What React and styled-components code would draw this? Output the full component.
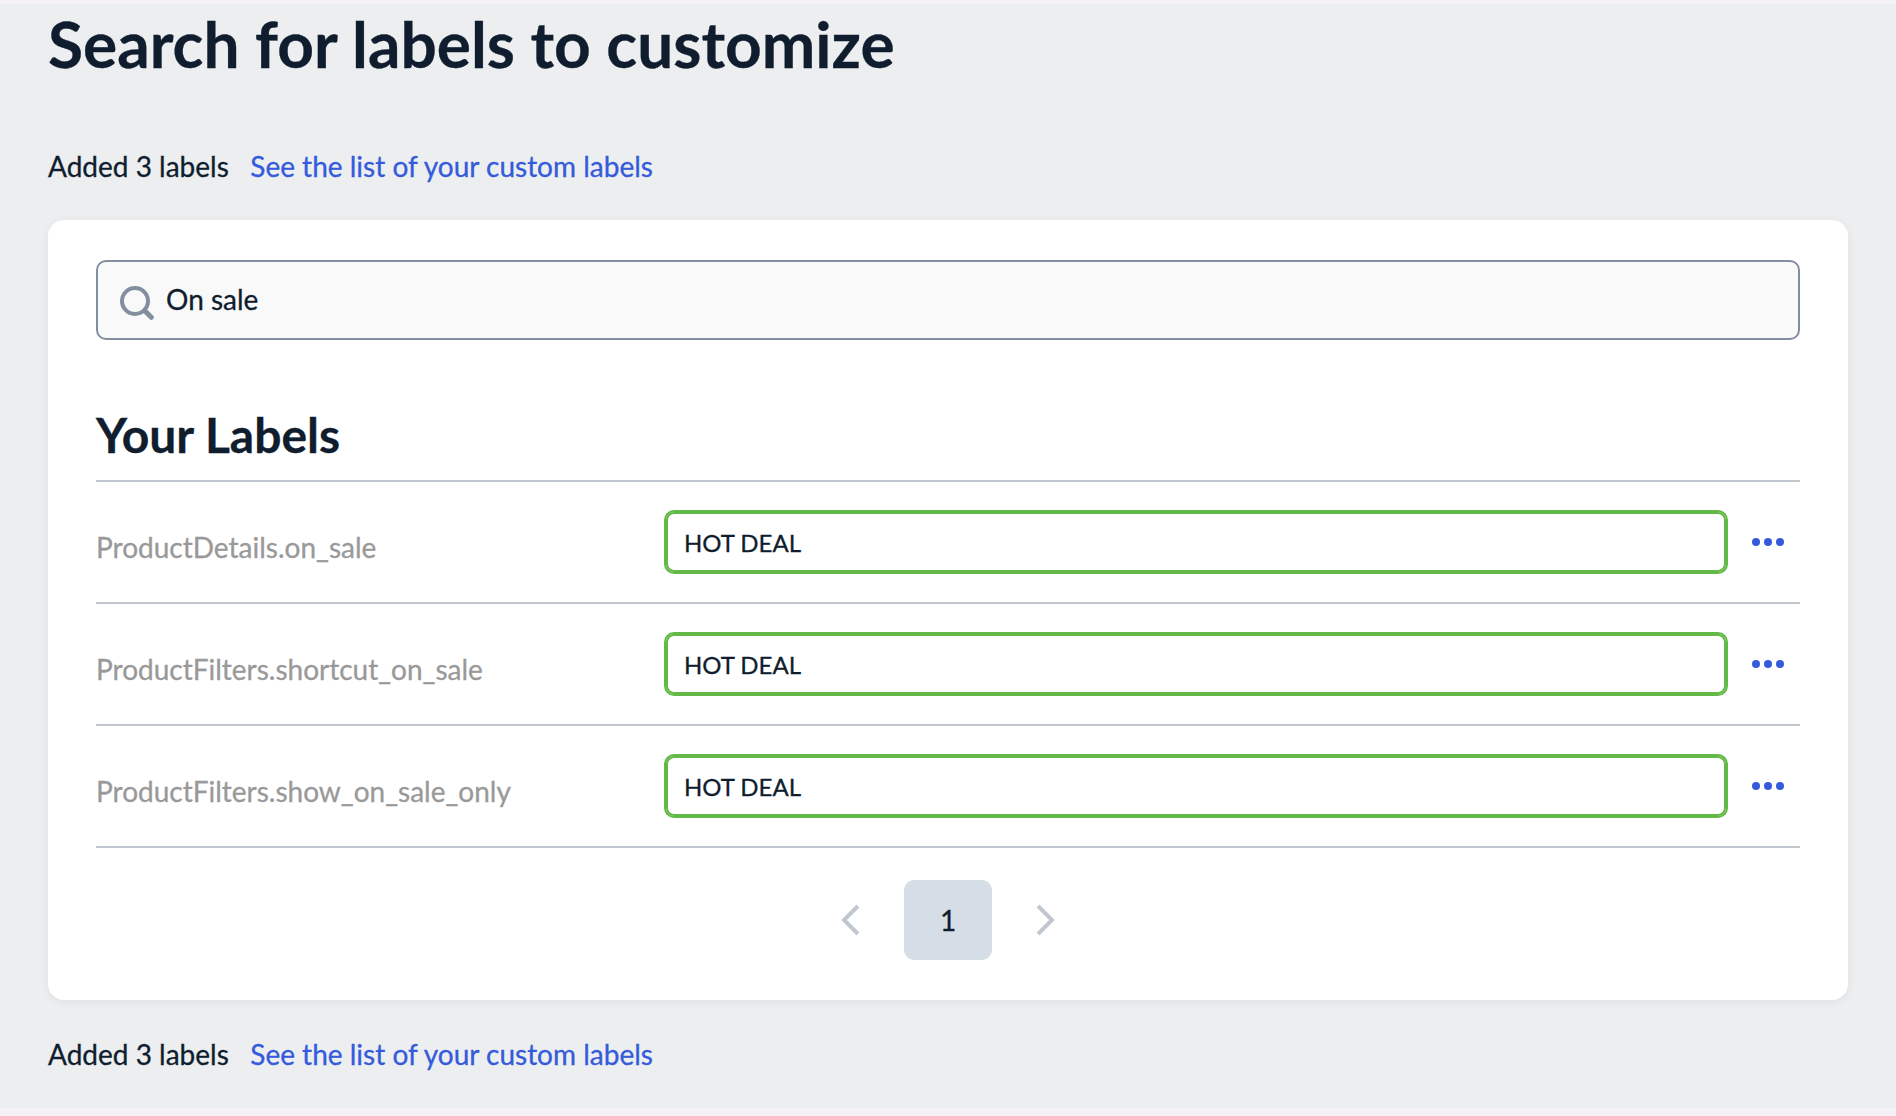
import React from 'react';
import styled, { createGlobalStyle } from 'styled-components';

const GlobalStyle = createGlobalStyle`
	* {
		box-sizing: border-box;
	}
	body {
		margin: 0;
		background: #f4f1f4;
		color: #0f1d2e;
		font-family: Lato, 'Liberation Sans', sans-serif;
		font-size: 28px;
		-webkit-text-stroke: 0.3px;
	}
`;

const Page = styled.div`
	height: 1116px;
	border-top: 4px solid #f4f1f4;
	border-bottom: 8px solid #f4f1f4;
	padding: 0 48px;
	background: #eceef0;
	overflow: hidden;
`;

const Title = styled.h1`
	margin: 0;
	padding-top: 4px;
	font-size: 64px;
	font-weight: 700;
	line-height: 72px;
`;

const Summary = styled.div`
	display: flex;
	gap: 21.5px;
	line-height: 40px;
	margin-top: ${(props) => props.$top}px;
`;

const Link = styled.a`
	color: #345bdb;
	text-decoration: none;
`;

const Card = styled.section`
	height: 780px;
	margin-top: 34px;
	padding: 40px 48px;
	border-radius: 16px;
	background: #fff;
	box-shadow: 0 2px 10px rgba(0, 0, 0, 0.06);
`;

const SearchBox = styled.label`
	display: flex;
	align-items: center;
	height: 80px;
	padding-left: 20px;
	border: 2px solid #838f9e;
	border-radius: 10px;
	background: #f9f9f9;
`;

const SearchIcon = styled.svg`
	width: 36px;
	height: 36px;
	margin: 4px 12px 0 0;
	fill: none;
	stroke: #838f9e;
	stroke-linecap: round;
`;

const Input = styled.input`
	flex: 1;
	min-width: 0;
	padding: 0 0 2px;
	border: 0;
	outline: 0;
	background: none;
	color: inherit;
	font: inherit;
`;

const SubTitle = styled.h2`
	margin: 0;
	padding: 65px 0 16px;
	border-bottom: 2px solid #c1c7ce;
	font-size: 48px;
	font-weight: 700;
	line-height: 59px;
`;

const Row = styled.div`
	display: grid;
	grid-template-columns: 568px 1064px 72px;
	align-items: center;
	height: 122px;
	border-bottom: 2px solid #c1c7ce;
`;

const Key = styled.span`
	padding-top: 9px;
	color: #999;
`;

const ValueInput = styled.input`
	width: 100%;
	height: 64px;
	padding: 0 18px;
	border: 2px solid #62b946;
	border-radius: 10px;
	outline: 0;
	box-shadow: inset 0 0 0 2px #62b946;
	background: #fff;
	color: inherit;
	font-family: inherit;
	font-size: 24px;
`;

const MoreButton = styled.button`
	display: flex;
	gap: 4px;
	padding: 0 0 0 24px;
	border: 0;
	background: none;
`;

const Dot = styled.span`
	width: 8px;
	height: 8px;
	border-radius: 50%;
	background: #345bdb;
`;

const Pagination = styled.nav`
	display: flex;
	justify-content: center;
	align-items: center;
	gap: 44px;
	margin-top: 32px;
`;

const PageNumber = styled.span`
	width: 88px;
	height: 80px;
	border-radius: 10px;
	background: #d5dde6;
	line-height: 81px;
	text-align: center;
`;

const Arrow = styled.svg`
	width: 20px;
	height: 32px;
	fill: none;
	stroke: #c1c7ce;
	stroke-width: 4;
`;

const labels = [
	{ key: 'ProductDetails.on_sale', value: 'HOT DEAL' },
	{ key: 'ProductFilters.shortcut_on_sale', value: 'HOT DEAL' },
	{ key: 'ProductFilters.show_on_sale_only', value: 'HOT DEAL' },
];

function LabelsSummary({ top }) {
	return (
		<Summary $top={top}>
			<span>Added 3 labels</span>
			<Link href="#custom">See the list of your custom labels</Link>
		</Summary>
	);
}

export default function App() {
	return (
		<Page>
			<GlobalStyle />
			<Title>Search for labels to customize</Title>
			<LabelsSummary top={66} />

			<Card>
				<SearchBox>
					<SearchIcon viewBox="0 0 36 36">
						<circle cx="17" cy="17" r="13" strokeWidth="4" />
						<path d="M27.5 27.5L33.3 33.3" strokeWidth="5" />
					</SearchIcon>
					<Input defaultValue="On sale" />
				</SearchBox>

				<SubTitle>Your Labels</SubTitle>
				{labels.map((label) => (
					<Row key={label.key}>
						<Key>{label.key}</Key>
						<ValueInput defaultValue={label.value} />
						<MoreButton aria-label="More">
							<Dot />
							<Dot />
							<Dot />
						</MoreButton>
					</Row>
				))}

				<Pagination>
					<Arrow viewBox="0 0 20 32">
						<path d="M18 2L4 16L18 30" />
					</Arrow>
					<PageNumber>1</PageNumber>
					<Arrow viewBox="0 0 20 32">
						<path d="M2 2L16 16L2 30" />
					</Arrow>
				</Pagination>
			</Card>

			<LabelsSummary top={34} />
		</Page>
	);
}
